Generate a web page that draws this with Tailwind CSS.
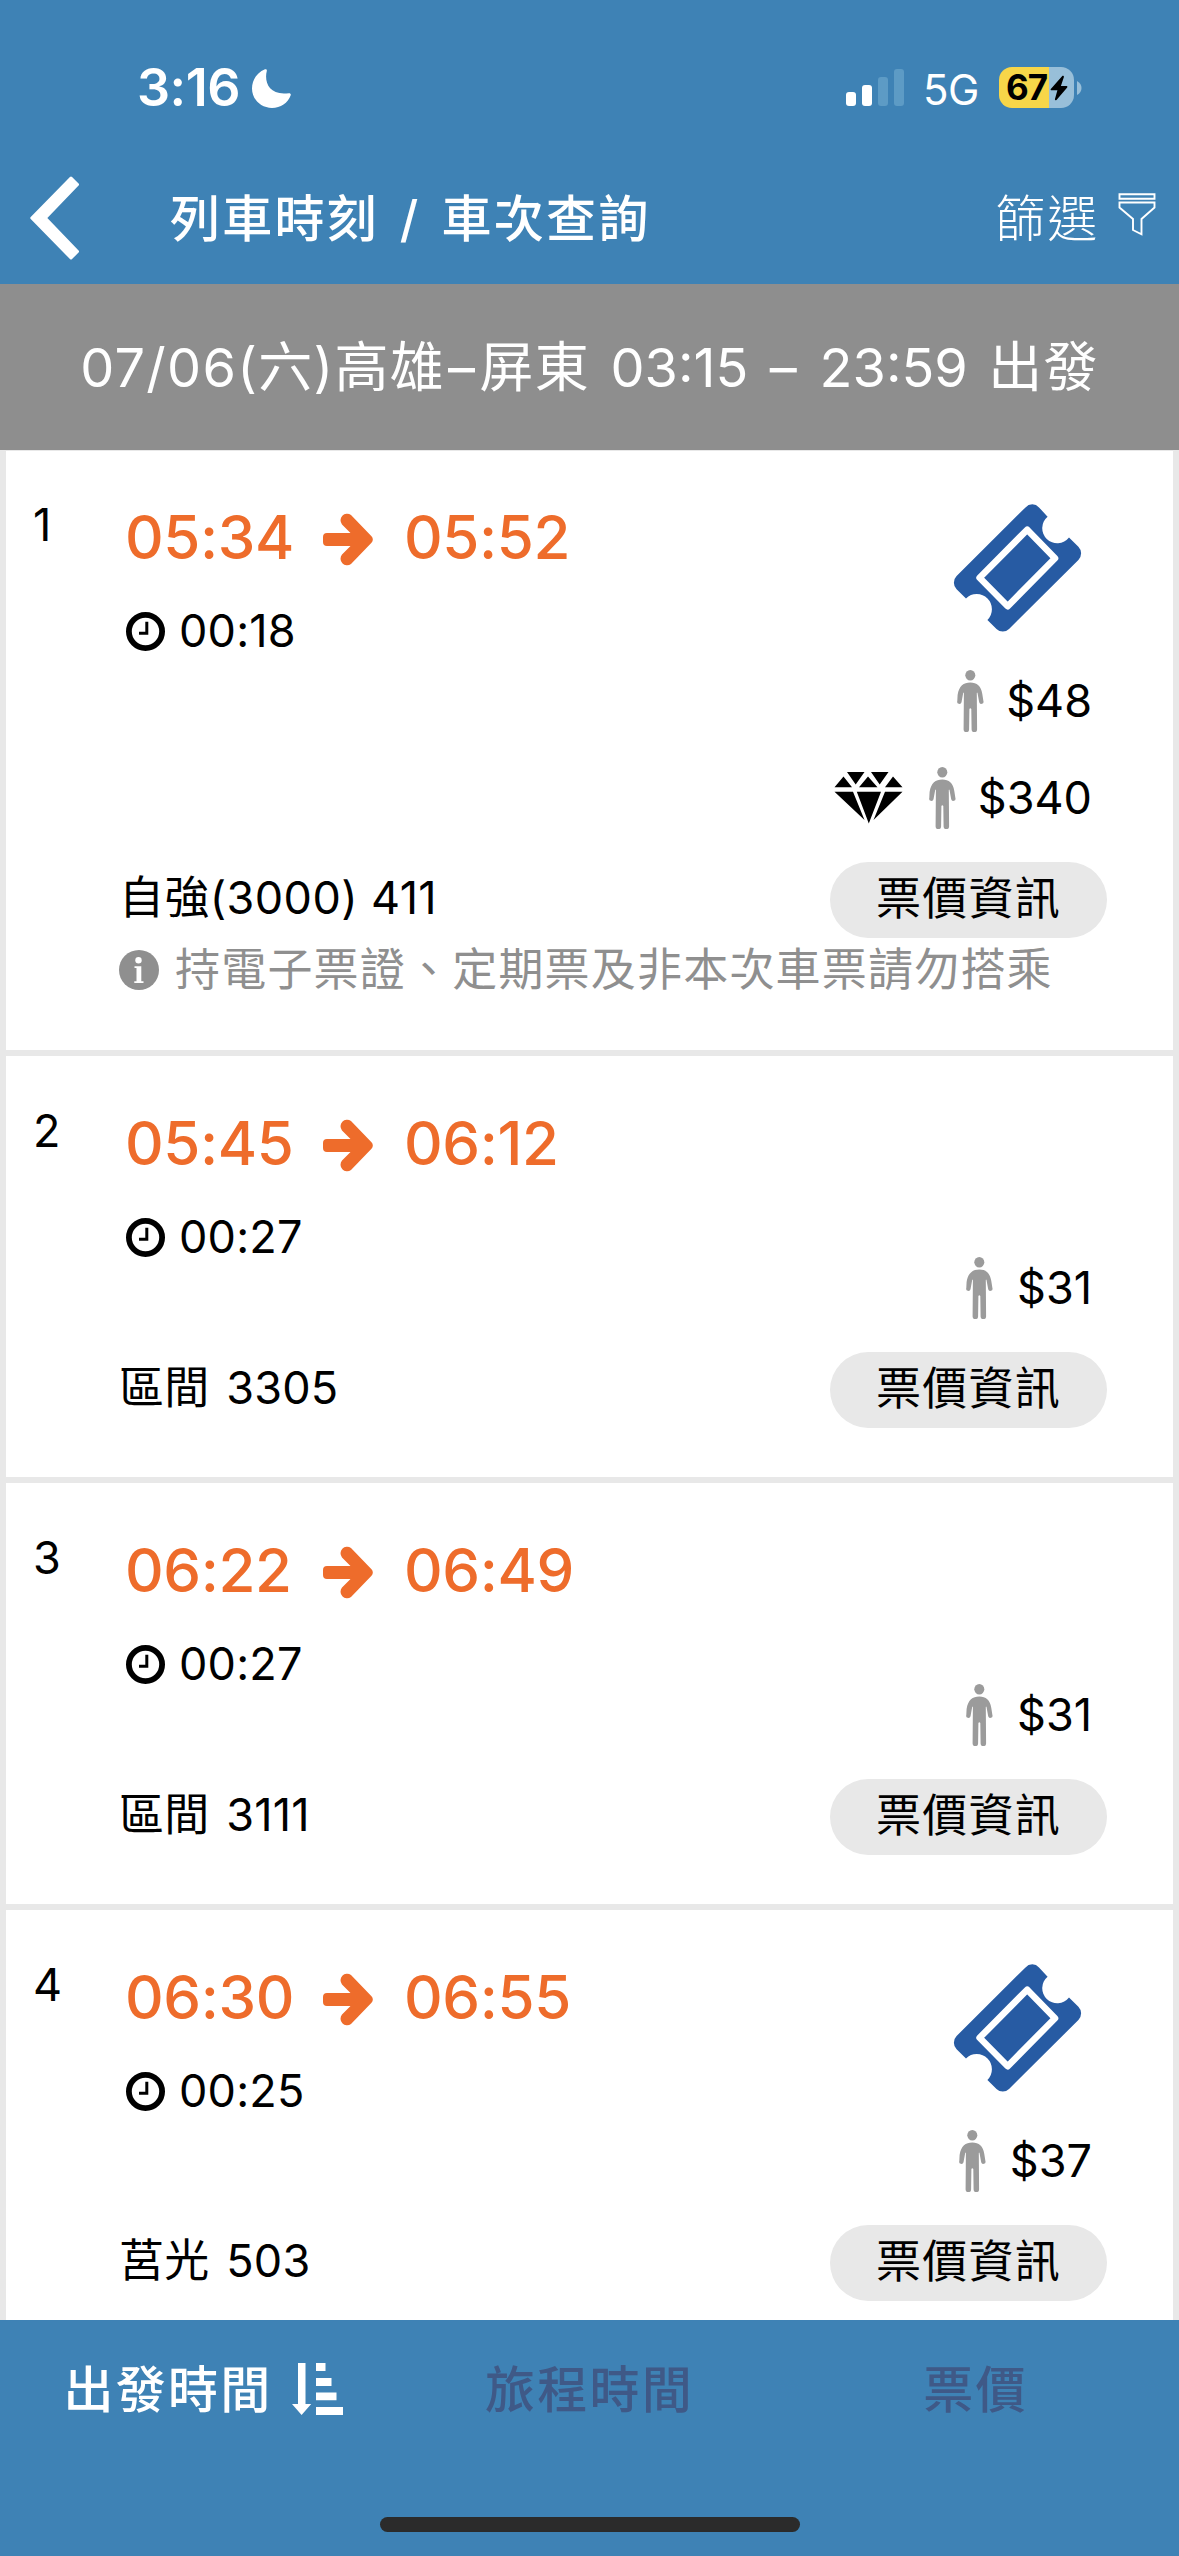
<!DOCTYPE html>
<html lang="zh-Hant">
<head>
<meta charset="utf-8">
<title>列車時刻 / 車次查詢</title>
<script src="https://cdn.jsdelivr.net/npm/@tailwindcss/browser@4"></script>
</head>
<body class="w-[1179px] h-[2556px] overflow-hidden bg-[#e8e8e8] text-black font-['Inter','Noto_Sans_CJK_TC',sans-serif]">
<svg width="0" height="0" class="absolute">
  <symbol id="arrow" viewBox="0 0 50 53"><path d="M4 20H27.5L19 11.5A6.6 6.6 0 0 1 28 2L48.5 23.3A4.5 4.5 0 0 1 48.5 29.7L28 51A6.6 6.6 0 0 1 19 41.5L27.5 33H4A4 4 0 0 1 0 29V24A4 4 0 0 1 4 20Z" fill="currentColor"/></symbol>
  <symbol id="clock" viewBox="0 0 39 39"><circle cx="19.5" cy="19.5" r="16.6" fill="none" stroke="currentColor" stroke-width="5.8"/><path d="M20.8 9.7V21.3H13" fill="none" stroke="currentColor" stroke-width="3"/></symbol>
  <symbol id="person" viewBox="0 0 27 62"><ellipse cx="13.3" cy="5.3" rx="5" ry="5.3"/><path d="M13.3 12.6C20 12.6 24 16 25.3 24L26.4 31A2 2 0 0 1 22.2 32.3L20.5 23Q20 22 19.8 23L20.1 59.4A2.4 2.4 0 0 1 14.6 59.4L14.3 39Q13.3 37.4 12.4 39L12.1 59.4A2.4 2.4 0 0 1 6.6 59.4L6.9 23Q6.6 22 6.2 23L4.5 32.3A2 2 0 0 1 .3 31L.6 25C2 16 6.6 12.6 13.3 12.6Z"/></symbol>
  <symbol id="ticket" viewBox="0 0 129 128"><path d="M72.5 3.4A9 9 0 0 1 86 3.4L94.6 12.7A15 15 0 1 0 116 33.5L125.4 42.7A9.5 9.5 0 0 1 125.4 56L56 125A9 9 0 0 1 43.5 125L34.4 116A15 15 0 1 0 13 94.4L3.6 85.3A9.5 9.5 0 0 1 3.6 72Z" fill="#275ba3"/><path d="M74.2 25.7L102 54.2 54.7 102.2 26.6 73.8Z" fill="none" stroke="#fff" stroke-width="6.6" stroke-linejoin="round"/></symbol>
</svg>

<!-- status bar + title bar -->
<header class="h-[284px] bg-[#3e82b5] text-white">
  <div class="h-[150px] pt-[58px] flex items-start">
    <div class="ml-[137px] w-[103px] h-[60px] leading-[60px] text-[52px] font-semibold tracking-[-0.500px] whitespace-nowrap shrink-0">3:16</div>
    <svg class="ml-[12px] mt-[11px] w-[39px] h-[39px] shrink-0" viewBox="0 0 39 39"><path d="M13 .3C14 -.2 15.2 .6 14.8 1.9C12 13 17 27 36.8 24.2C38.2 24 39.2 25 38.7 26.3C36 34 28.500 39 20 39C9 39 0 30.500 0 19.500C0 11 5 3.500 13 .3Z" fill="#fff"/></svg>
    <svg class="ml-[555px] mt-[11px] w-[58px] h-[37px] shrink-0" viewBox="0 0 58 37" fill="#fff"><rect y="23" width="10" height="14" rx="3"/><rect x="16" y="16" width="10" height="21" rx="3"/><g fill="#5d9bc5"><rect x="32" y="8" width="10" height="29" rx="3"/><rect x="48" width="10" height="37" rx="3"/></g></svg>
    <div class="ml-[19px] mt-[2px] w-[76px] h-[60px] leading-[60px] text-[42px] tracking-[-0.500px] shrink-0">5G</div>
    <div class="mt-[9px] w-[75px] h-[41px] shrink-0 rounded-[13px] flex bg-linear-to-r from-[#f7d649] from-[67%] to-[#98bfd9] to-[67%] text-black">
      <span class="ml-[7px] w-[44px] shrink-0 leading-[41px] text-[35px] font-bold tracking-[-1px]">67</span>
      <svg class="mt-[8px] w-[18px] h-[26px] shrink-0" viewBox="0 0 18 26"><path d="M12.500 .8L.8 13.900Q.1 15 1.300 15.200H7.400L4.900 24.200Q5 26 6.500 25L17.200 12.400Q17.900 11.200 16.700 11H10.900L13.900 1.900Q14 .2 12.500 .8Z"/></svg>
    </div>
    <svg class="ml-[3px] mt-[23px] w-[5px] h-[14px] shrink-0" viewBox="0 0 5 14"><path d="M0 0Q4.500 2.500 4.500 7T0 14Z" fill="#98bfd9"/></svg>
  </div>
  <div class="h-[134px] flex items-start">
    <svg class="ml-[30px] mt-[26px] w-[49px] h-[84px]" viewBox="0 0 49 84"><path d="M41 2L47.500 8.500 15.300 42 47.500 75.500 41 82 1.800 42Z" fill="#fff" stroke="#fff" stroke-width="3" stroke-linejoin="round"/></svg>
    <h1 class="ml-[91px] mt-[39px] h-[60px] leading-[60px] text-[50px] font-medium tracking-[2.200px] [word-spacing:5.500px] whitespace-nowrap w-[825px]">列車時刻 / 車次查詢</h1>
    <div class="mt-[39px] h-[60px] leading-[60px] text-[50px] font-light tracking-[2.200px] whitespace-nowrap w-[123px]">篩選</div>
    <svg class="mt-[43px] w-[38px] h-[43px]" viewBox="0 0 38 43" fill="none" stroke="#fff" stroke-width="1.900"><path d="M1.500 1.300H36.500V5.700H1.500ZM1.500 9.500H36.500V14.500L23.500 26V41.300L15 37V26L1.500 14.500Z"/></svg>
  </div>
</header>

<div class="h-[166px] bg-[#8e8e8e] text-white flex justify-center">
  <p class="mt-[54px] h-[60px] leading-[60px] text-[54px] tracking-[1.300px] [word-spacing:4px] whitespace-nowrap">07/06(六)高雄<span class="mx-[3px]">–</span>屏東 <span class="tracking-normal">03:15</span> <span class="mx-[1px]">–</span> <span class="tracking-normal">23:59</span> 出發</p>
</div>

<main class="h-[1870px] overflow-hidden px-[6px] text-[45px] border-t border-[#e8e8e8]">
  <section class="h-[599px] bg-white mb-[6px]">
    <div class="flex h-[487px] pr-[66px]">
      <div class="w-[119px] pl-[27px] pt-[44px] leading-[60px]">1</div>
      <div class="flex flex-col w-[500px]">
        <div class="mt-[56px] h-[61px] leading-[61px] flex items-center text-[#ee6c2b] text-[60px] font-medium tracking-[-0.400px]"><span class="w-[198px]">05:34</span><svg class="w-[50px] h-[53px] mt-[3px] mr-[31px]"><use href="#arrow"/></svg><span>05:52</span></div>
        <div class="mt-[33px] h-[60px] leading-[60px] flex items-center tracking-[0.200px]"><svg class="ml-[1px] mr-[14px] w-[39px] h-[39px]"><use href="#clock"/></svg>00:18</div>
        <div class="mt-auto mb-[10px] h-[60px] leading-[60px] -ml-[6px] tracking-[0.400px] whitespace-nowrap">自強(3000) 411</div>
      </div>
      <div class="flex-1 flex flex-col items-end justify-end">
        <svg class="w-[129px] h-[128px] mr-[25px] mb-[38px]"><use href="#ticket"/></svg>
        <div class="flex items-center h-[62px] mb-[35px] mr-[15px] leading-[60px]"><svg class="w-[27px] h-[62px] mr-[22px]" fill="#9b9b9b"><use href="#person"/></svg>$48</div>
        <div class="flex items-center h-[62px] mb-[33px] mr-[15px] leading-[60px]">
          <svg class="w-[69px] h-[53px] mr-[26px] -mt-[1px] overflow-visible blur-[0.700px]" viewBox="0 0 69 53"><path d="M13 1H30.500L21.700 13.500ZM37 1H54.500L45.700 13.500ZM9.500 5.500L18 16.200H.5ZM34 5.500L43.500 16.200H25ZM59 5.500L68.500 16.200H51ZM.5 20.800H19L30.500 49ZM22.800 20.800H47L34.800 52.500ZM51 20.800H68.500L39.500 49Z"/></svg>
          <svg class="w-[27px] h-[62px] mr-[22px]" fill="#9b9b9b"><use href="#person"/></svg>$340</div>
        <button class="w-[277px] h-[76px] rounded-full bg-[#e8e8e8] leading-[72px] pb-[2px] tracking-[1.300px]">票價資訊</button>
      </div>
    </div>
    <div class="flex items-center h-[64px] pl-[113px] text-[#8f8f8f] leading-[60px] whitespace-nowrap tracking-[1.200px]">
      <svg class="w-[40px] h-[40px] mr-[16px]" viewBox="0 0 40 40"><circle cx="20" cy="20" r="20" fill="#8f8f8f"/><circle cx="19.500" cy="10.300" r="3.200" fill="#fff"/><path d="M15.500 16.200H22.300V31.200H24.500V33H15.300V31.200H17.500V18H15.500Z" fill="#fff"/></svg>
      持電子票證、定期票及非本次車票請勿搭乘
    </div>
  </section>

  <section class="h-[421px] bg-white mb-[6px]">
    <div class="flex h-[372px] pr-[66px]">
      <div class="w-[119px] pl-[27px] pt-[45px] leading-[60px]">2</div>
      <div class="flex flex-col w-[500px]">
        <div class="mt-[57px] h-[61px] leading-[61px] flex items-center text-[#ee6c2b] text-[60px] font-medium tracking-[-0.400px]"><span class="w-[198px]">05:45</span><svg class="w-[50px] h-[53px] mt-[3px] mr-[31px]"><use href="#arrow"/></svg><span>06:12</span></div>
        <div class="mt-[33px] h-[60px] leading-[60px] flex items-center tracking-[0.200px]"><svg class="ml-[1px] mr-[14px] w-[39px] h-[39px]"><use href="#clock"/></svg>00:27</div>
        <div class="mt-auto mb-[10px] h-[60px] leading-[60px] -ml-[6px] tracking-[0.200px] [word-spacing:4px] whitespace-nowrap">區間 3305</div>
      </div>
      <div class="flex-1 flex flex-col items-end justify-end">
        <div class="flex items-center h-[62px] mb-[33px] mr-[15px] leading-[60px]"><svg class="w-[27px] h-[62px] mr-[24px]" fill="#9b9b9b"><use href="#person"/></svg>$31</div>
        <button class="w-[277px] h-[76px] rounded-full bg-[#e8e8e8] leading-[72px] pb-[2px] tracking-[1.300px]">票價資訊</button>
      </div>
    </div>
  </section>

  <section class="h-[421px] bg-white mb-[6px]">
    <div class="flex h-[372px] pr-[66px]">
      <div class="w-[119px] pl-[27px] pt-[45px] leading-[60px]">3</div>
      <div class="flex flex-col w-[500px]">
        <div class="mt-[57px] h-[61px] leading-[61px] flex items-center text-[#ee6c2b] text-[60px] font-medium tracking-[-0.400px]"><span class="w-[198px]">06:22</span><svg class="w-[50px] h-[53px] mt-[3px] mr-[31px]"><use href="#arrow"/></svg><span>06:49</span></div>
        <div class="mt-[33px] h-[60px] leading-[60px] flex items-center tracking-[0.200px]"><svg class="ml-[1px] mr-[14px] w-[39px] h-[39px]"><use href="#clock"/></svg>00:27</div>
        <div class="mt-auto mb-[10px] h-[60px] leading-[60px] -ml-[6px] tracking-[0.200px] [word-spacing:4px] whitespace-nowrap">區間 3111</div>
      </div>
      <div class="flex-1 flex flex-col items-end justify-end">
        <div class="flex items-center h-[62px] mb-[33px] mr-[15px] leading-[60px]"><svg class="w-[27px] h-[62px] mr-[24px]" fill="#9b9b9b"><use href="#person"/></svg>$31</div>
        <button class="w-[277px] h-[76px] rounded-full bg-[#e8e8e8] leading-[72px] pb-[2px] tracking-[1.300px]">票價資訊</button>
      </div>
    </div>
  </section>

  <section class="h-[440px] bg-white">
    <div class="flex h-[391px] pr-[66px]">
      <div class="w-[119px] pl-[27px] pt-[45px] leading-[60px]">4</div>
      <div class="flex flex-col w-[500px]">
        <div class="mt-[57px] h-[61px] leading-[61px] flex items-center text-[#ee6c2b] text-[60px] font-medium tracking-[-0.400px]"><span class="w-[198px]">06:30</span><svg class="w-[50px] h-[53px] mt-[3px] mr-[31px]"><use href="#arrow"/></svg><span>06:55</span></div>
        <div class="mt-[33px] h-[60px] leading-[60px] flex items-center tracking-[0.200px]"><svg class="ml-[1px] mr-[14px] w-[39px] h-[39px]"><use href="#clock"/></svg>00:25</div>
        <div class="mt-auto mb-[10px] h-[60px] leading-[60px] -ml-[6px] tracking-[0.200px] [word-spacing:4px] whitespace-nowrap">莒光 503</div>
      </div>
      <div class="flex-1 flex flex-col items-end justify-end">
        <svg class="w-[129px] h-[128px] mr-[25px] mb-[38px]"><use href="#ticket"/></svg>
        <div class="flex items-center h-[62px] mb-[33px] mr-[15px] leading-[60px]"><svg class="w-[27px] h-[62px] mr-[24px]" fill="#9b9b9b"><use href="#person"/></svg>$37</div>
        <button class="w-[277px] h-[76px] rounded-full bg-[#e8e8e8] leading-[72px] pb-[2px] tracking-[1.300px]">票價資訊</button>
      </div>
    </div>
  </section>
</main>

<!-- sort tabs -->
<footer class="h-[236px] bg-[#3e82b5] flex flex-col items-center">
  <nav class="w-full h-[197px] pt-[40px] grid grid-cols-3 text-[50px] font-medium leading-[60px] tracking-[2.200px] text-[#3f5987]">
    <div class="flex items-start justify-center pl-[14px] text-white">出發時間<svg class="ml-[20px] mt-[3px] w-[51px] h-[52px]" viewBox="0 0 51 52" fill="#fff"><path d="M6 0H13.500V41H19.200L9.600 52 0 41H6ZM24 0H33.500V8H24ZM24 15H39.500V23H24ZM24 29.500H44.500V37.300H24ZM24 44H51V52H24Z"/></svg></div>
    <div class="text-center">旅程時間</div>
    <div class="text-center pr-[14px]">票價</div>
  </nav>
  <div class="w-[420px] h-[15px] rounded-full bg-[#2b2b2b]"></div>
</footer>
</body>
</html>
